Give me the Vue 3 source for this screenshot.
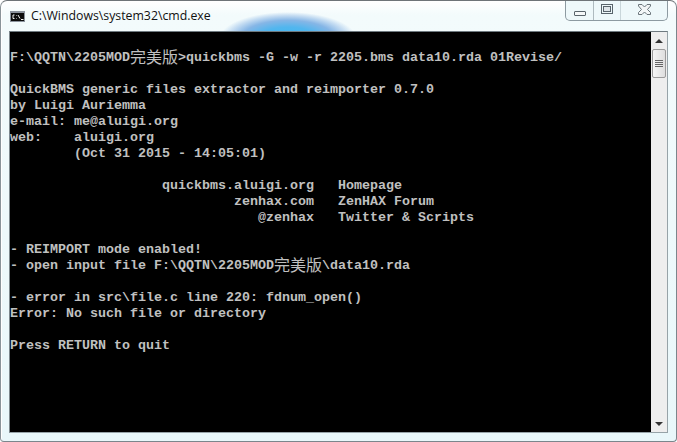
<script setup>
const rows = [
  [],
  ['F:\\QQTN\\2205MOD', { cjk: '完美版' }, '>quickbms -G -w -r 2205.bms data10.rda 01Revise/'],
  [],
  ['QuickBMS generic files extractor and reimporter 0.7.0'],
  ['by Luigi Auriemma'],
  ['e-mail: me@aluigi.org'],
  ['web:    aluigi.org'],
  ['        (Oct 31 2015 - 14:05:01)'],
  [],
  ['                   quickbms.aluigi.org   Homepage'],
  ['                            zenhax.com   ZenHAX Forum'],
  ['                               @zenhax   Twitter & Scripts'],
  [],
  ['- REIMPORT mode enabled!'],
  ['- open input file F:\\QQTN\\2205MOD', { cjk: '完美版' }, '\\data10.rda'],
  [],
  ['- error in src\\file.c line 220: fdnum_open()'],
  ['Error: No such file or directory'],
  [],
  ['Press RETURN to quit'],
]
</script>

<template>
  <div class="desktop">
    <div class="window">
      <header class="titlebar">
        <svg class="appicon" width="15" height="11" viewBox="0 0 15 11">
          <rect x="0" y="0" width="15" height="11" fill="#8b929c" />
          <rect x="1" y="2" width="13" height="8" fill="#0c0c0c" />
          <path d="M4.5 4H3v3.5h1.5M6.5 4.5v.5M6.5 7v.5M8 4l2 3.5M11 8.5h2.5" stroke="#f0f0f0" stroke-width="1" fill="none" />
        </svg>
        <span class="title">C:\Windows\system32\cmd.exe</span>
        <div class="controls">
          <button class="ctl ctl-min"><i></i></button>
          <button class="ctl ctl-max"><i></i></button>
          <button class="ctl ctl-close">
            <svg width="13" height="11" viewBox="0 0 13 11">
              <path d="M0.5 0.5h3.5l2.5 2.5 2.5-2.5h3.5v1.5l-3 3.5 3 3v2h-3.5l-2.5-2.5-2.5 2.5h-3.5v-2l3-3-3-3.5z" fill="#f3f6f7" stroke="#6b757b" stroke-width="1" />
            </svg>
          </button>
        </div>
      </header>
      <main class="client">
        <div class="console">
          <div v-for="(row, i) in rows" :key="i" class="line"><template v-for="(part, j) in row" :key="j"><span v-if="part.cjk" class="cjk">{{ part.cjk }}</span><template v-else>{{ part }}</template></template></div>
        </div>
        <aside class="scrollbar">
          <div class="arrow up"></div>
          <div class="thumb"><span></span><span></span><span></span><span></span></div>
          <div class="track"></div>
          <div class="arrow down"></div>
        </aside>
      </main>
    </div>
  </div>
</template>

<style>
html, body { margin: 0; background: #fff; }
</style>

<style scoped>
.desktop { width: 677px; height: 442px; overflow: hidden; background: #fff; }
.window {
  box-sizing: border-box; width: 677px; height: 442px; display: flex; flex-direction: column;
  border: 1px solid #7b868c; border-top-color: #6e7478; border-left-color: #8a9499; border-radius: 7px 7px 4px 4px;
  background:
    radial-gradient(ellipse 68px 26px at 287px 37px, #3cb9f2 0%, #52b6ee 42%, #86b6e6 68%, rgba(178,208,238,.75) 86%, rgba(235,248,251,0) 100%),
    linear-gradient(180deg, #fff 0, #f3fbfc 14px, #e9f7fa 100%);
  box-shadow: inset 1px 1px 0 #fff;
}
.titlebar { flex: none; height: 30px; display: flex; align-items: flex-start; padding-left: 9px; }
.appicon { margin-top: 10px; flex: none; }
.title { margin-left: 6px; margin-top: 6px; font: 12.3px/18px "Open Sans", Arial, sans-serif; color: #111; }
.controls {
  margin-left: auto; margin-right: 8px; display: flex; height: 20px; box-sizing: border-box;
  border: 1px solid #8d9aa1; border-top: 0; border-radius: 0 0 5px 5px; background: #eef8fa;
}
.ctl { padding: 0; border: 0; background: transparent; display: flex; align-items: center; justify-content: center; }
.ctl-min { width: 28px; border-right: 1px solid #aebabf; }
.ctl-max { width: 27px; border-right: 1px solid #c9d6da; }
.ctl-close { width: 46px; }
.ctl-min i { display: block; width: 10px; height: 3px; margin-top: 6px; background: #f5f8f9; border: 1px solid #59646b; border-radius: 1px; }
.ctl-max i { display: block; width: 6px; height: 4px; margin-top: -3px; background: #dfe6ea; border: 1px solid #59646b; outline: 1px solid #59646b; outline-offset: 1px; }
.ctl-close svg { margin-top: -3px; }
.client {
  flex: 1; min-height: 0; display: flex; margin: 0 8px 8px 8px;
  border: 1px solid #97a3a8; border-top-color: #6f7a80; border-left-color: #7d888d;
}
.console {
  flex: 1; min-width: 0; background: #000; color: #c0c0c0; padding-top: 2px;
  font: bold 13.33px/16px "Liberation Mono", "Courier New", monospace; white-space: pre;
}
.line { height: 16px; }
.cjk { font: 400 16px/16px "Noto Sans CJK SC", sans-serif; display: inline-block; height: 16px; vertical-align: top; margin-top: -2px; }
.scrollbar { flex: none; width: 16px; display: flex; flex-direction: column; background: #eeeeee; border-left: 0; }
.arrow { flex: none; height: 17px; position: relative; }
.arrow::after { content: ""; position: absolute; left: 4px; top: 7px; border-left: 4px solid transparent; border-right: 4px solid transparent; }
.arrow.up::after { border-bottom: 4px solid #333; }
.arrow.down::after { border-top: 4px solid #333; }
.thumb {
  flex: none; box-sizing: border-box; height: 29px; margin: 0 1px; border: 1px solid #9b9b9b; border-radius: 2px;
  background: linear-gradient(90deg, #f6f6f6, #dedede); display: flex; flex-direction: column; align-items: center; justify-content: center; gap: 1px;
}
.thumb span { display: block; width: 8px; height: 1px; background: #666; }
.track { flex: 1; }
</style>
